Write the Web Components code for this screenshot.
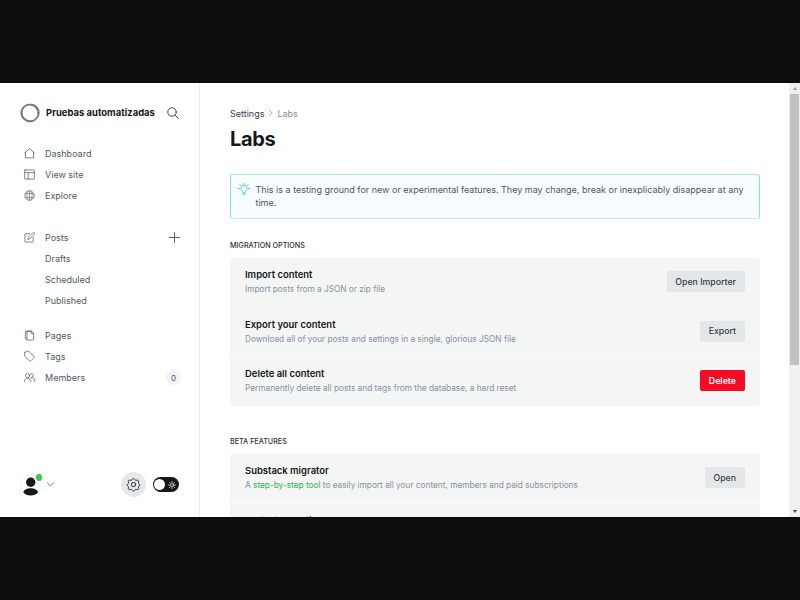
<!DOCTYPE html>
<html lang="es">
<head>
<meta charset="utf-8">
<title>Labs</title>
<style>
html,body{margin:0;height:100%;background:#0e0e0e}
body{display:flow-root;font-family:Inter,"Liberation Sans",sans-serif;font-size:9px;color:#15171a;overflow:hidden}
</style>
</head>
<body>
<ghost-app></ghost-app>
<script>
const define=(name,html)=>{
  const t=document.createElement('template');
  t.innerHTML=html;
  customElements.define(name,class extends HTMLElement{
    connectedCallback(){
      if(this.shadowRoot)return;
      this.attachShadow({mode:'open'}).append(t.content.cloneNode(true));
    }
  });
};

const icons={
  home:'<path d="M1.500 10.500 12 1.500l10.500 9M3.200 9.200v12.300h17.600V9.200"/>',
  layout:'<rect x="1.500" y="2" width="21" height="20" rx="1"/><path d="M2 8h20M9 8v14"/>',
  globe:'<circle cx="12" cy="12" r="10.500"/><path d="M2.500 8h19M2.500 16h19M12 2v20"/><path d="M9 2c-4 6-4 14 0 20M15 2c4 6 4 14 0 20"/>',
  edit:'<path d="M12.500 4H3.200A1.200 1.200 0 0 0 2 5.200V20.800A1.200 1.200 0 0 0 3.200 22H18.800A1.200 1.200 0 0 0 20 20.800V12M8.500 15.500l1-4.200L19 1.800a2 2 0 0 1 3.200 3.200L12.700 14.500z"/>',
  pages:'<path d="M6.500 4.500V22H19a2 2 0 0 0 2-2V6.500L17 3H8a1.500 1.500 0 0 0-1.500 1.500zM15.500 3v4.500H21M6.500 20H4.500A1.500 1.500 0 0 1 3 18.500V3.500A1.500 1.500 0 0 1 4.500 2h11"/>',
  tag:'<path d="M1.500 3.500v6.800a2 2 0 0 0 .6 1.400l9.900 9.900a2 2 0 0 0 2.800 0l7-7a2 2 0 0 0 0-2.800L12 2.100a2 2 0 0 0-1.400-.6H3.500a2 2 0 0 0-2 2z"/>',
  members:'<circle cx="7.800" cy="8" r="4.500"/><path d="M.8 21c0-10 14-10 14 0M14 4.200a4.300 4.300 0 1 1 1.800 8.100M16 12.500c4.500-.8 7.500 3 7.500 8"/>',
  search:'<circle cx="10" cy="10" r="8.500"/><path d="m16.200 16.200 6.800 6.800"/>',
  plus:'<path d="M12 1v22M1 12h22"/>',
  down:'<path d="m1 6 11 11L23 6"/>',
  right:'<path d="m6 2 11 10L6 22"/>',
  gear:'<circle cx="12" cy="12" r="4"/><path d="M9.700 2.300c.8-1.700 3.800-1.700 4.600 0l.5 1.100a2 2 0 0 0 2.400 1l1.200-.4c1.800-.6 3.700 1.300 3.100 3.100l-.4 1.200a2 2 0 0 0 1 2.400l.4.200c1.500.9 1.500 3.400-.2 4.200l-.4.200a2 2 0 0 0-.8 2.200l.4 1.200c.6 1.800-1.300 3.300-3.100 2.700l-1.200-.4a2 2 0 0 0-2.400 1l-.5.900c-.8 1.500-3.800 1.500-4.600 0l-.5-.9a2 2 0 0 0-2.400-1l-1.200.4c-1.800.6-3.700-.9-3.100-2.700l.4-1.200a2 2 0 0 0-.8-2.200l-.4-.2c-1.700-.8-1.700-3.300-.2-4.200l.4-.2a2 2 0 0 0 1-2.400l-.4-1.200C1.900 5.300 3.800 3.400 5.600 4l1.200.4a2 2 0 0 0 2.400-1z"/>',
  sun:'<circle cx="12" cy="12" r="4.500"/><path d="M12 1v3.500M12 19.500V23M1 12h3.500M19.500 12H23M4.200 4.200l2.500 2.500M17.300 17.300l2.500 2.500M4.200 19.800l2.500-2.500M17.300 6.700l2.500-2.500"/>',
  bulb:'<path d="M9.600 19v-2.500a6 6 0 1 1 4.800 0V19zM9.800 22.500h4.400M12 .5v2.800M.5 11h2.700M20.800 11h2.700M3.500 3.200l2.200 2.200M20.500 3.200l-2.200 2.200"/>'
};
customElements.define('ui-icon',class extends HTMLElement{
  connectedCallback(){
    if(this.shadowRoot)return;
    const s=this.getAttribute('size')||11,w=this.getAttribute('stroke')||1.6;
    this.attachShadow({mode:'open'}).innerHTML=`<style>:host{display:block;flex:none;width:${s}px;height:${s}px}svg{display:block;width:100%;height:100%;overflow:visible;fill:none;stroke:currentColor;stroke-width:${w};stroke-linejoin:round;stroke-linecap:round}</style><svg viewBox="0 0 24 24">${icons[this.getAttribute('name')]}</svg>`;
  }
});

define('nav-item',`<style>
:host{display:flex;align-items:center;height:21.150px;padding:0 19px 0 24px;color:#4d5a66}
.i{width:21px;flex:none}
.t{flex:1}
</style><span class="i"><slot name="icon"></slot></span><span class="t"><slot></slot></span><slot name="end"></slot>`);

define('count-badge',`<style>:host{display:grid;place-items:center;width:15px;height:15px;margin-right:-1px;border-radius:50%;background:#f1f3f4;color:#4d5a66;font-size:8px}</style><slot></slot>`);

define('brand-header',`<style>
:host{display:flex;align-items:center;height:20px;padding:0 20px;color:#15171a}
svg{width:20px;height:20px;flex:none;fill:none}
b{font-weight:700;font-size:9.46px;line-height:12px;flex:1;margin:0 0 1px 6px;white-space:nowrap}
ui-icon{color:#394047}
</style><svg viewBox="0 0 20 20"><circle cx="10" cy="10" r="8.500" stroke="#55585b" stroke-width="1.300"/><ellipse cx="10.600" cy="9.500" rx="8.700" ry="8.300" stroke="#777" stroke-width=".9"/><ellipse cx="9.500" cy="10.500" rx="8.800" ry="8.200" stroke="#8a8a8a" stroke-width=".7" transform="rotate(30 10 10)"/></svg><b><slot></slot></b><ui-icon name="search" size="12" stroke="1.900"></ui-icon>`);

define('user-menu',`<style>
:host{display:flex;align-items:center;height:25px;padding:0 20px 0 20px}
.av{position:relative;width:22px;height:22px}
.av svg{display:block;width:22px;height:22px}
.dot{position:absolute;left:15.500px;top:.500px;width:6.500px;height:6.500px;border-radius:50%;background:#30cf43}
.down{margin-left:5px;color:#626d79}
.gear{display:grid;place-items:center;width:25px;height:25px;border-radius:50%;background:#e6e9eb;margin-left:auto;color:#222629}
.sw{display:flex;align-items:center;justify-content:space-between;box-sizing:border-box;width:26.500px;height:14.500px;margin-left:7px;padding:1.500px 3px 1.500px 1.200px;border-radius:8px;background:#15171a;color:#fff}
.k{width:11.500px;height:11.500px;border-radius:50%;background:#fff}
</style>
<div class="av"><svg viewBox="0 0 22 22"><circle cx="11" cy="11" r="10.500" fill="#fff" stroke="#f0f1f2"/><circle cx="10.700" cy="8.300" r="4.700" fill="#15171a"/><path d="M3.300 18.200c1.500-5.200 13.300-5.200 14.800 0-3.300 4.300-11.500 4.300-14.800 0z" fill="#15171a"/></svg><span class="dot"></span></div>
<ui-icon class="down" name="down" size="7" stroke="3"></ui-icon>
<div class="gear"><ui-icon name="gear" size="13" stroke="1.800"></ui-icon></div>
<div class="sw"><span class="k"></span><ui-icon name="sun" size="8" stroke="2"></ui-icon></div>`);

define('side-bar',`<style>
:host{display:flex;flex-direction:column;box-sizing:border-box;width:200px;height:100%;flex:none;padding:20px 0;border-right:1px solid #ebeef0}
.g1{margin-top:20px}.g2{margin-top:20.500px}.g3{margin-top:13.500px}
user-menu{margin-top:auto}
.plus{color:#394047}
</style>
<brand-header>Pruebas automatizadas</brand-header>
<div class="g1">
<nav-item><ui-icon slot="icon" name="home"></ui-icon>Dashboard</nav-item>
<nav-item><ui-icon slot="icon" name="layout"></ui-icon>View site</nav-item>
<nav-item><ui-icon slot="icon" name="globe" stroke="1.300"></ui-icon>Explore</nav-item>
</div>
<div class="g2">
<nav-item><ui-icon slot="icon" name="edit"></ui-icon>Posts<ui-icon class="plus" slot="end" name="plus" size="11" stroke="1.800"></ui-icon></nav-item>
<nav-item>Drafts</nav-item>
<nav-item>Scheduled</nav-item>
<nav-item>Published</nav-item>
</div>
<div class="g3">
<nav-item><ui-icon slot="icon" name="pages"></ui-icon>Pages</nav-item>
<nav-item><ui-icon slot="icon" name="tag"></ui-icon>Tags</nav-item>
<nav-item><ui-icon slot="icon" name="members"></ui-icon>Members<count-badge slot="end">0</count-badge></nav-item>
</div>
<user-menu></user-menu>`);

define('info-box',`<style>
:host{display:flex;box-sizing:border-box;height:45px;padding:8px 8px;border:1px solid #8fdaf9;border-top-color:#a9e2fa;border-bottom-color:#bfe9fb;border-radius:2px;background:#f7fcff;color:#50565d;line-height:13.300px}
ui-icon{color:#45c3f7;margin:0 5.200px 0 -.700px}
</style><ui-icon name="bulb" size="12" stroke="1.800"></ui-icon><span><slot></slot></span>`);

define('action-button',`<style>
:host{display:grid;place-items:center;box-sizing:border-box;height:21px;padding:0 8.500px;border-radius:2px;background:#e3e7ea;color:#394047;font-size:8.750px;font-weight:500;white-space:nowrap}
:host([danger]){background:#f50b23;color:#fff;font-weight:600}
</style><slot></slot>`);

define('setting-row',`<style>
:host{display:flex;align-items:center;justify-content:space-between;box-sizing:border-box;height:49.300px;padding:0 15px;border-bottom:1px solid #fbfcfc}
:host([plain]){border-bottom-color:transparent}
h4{margin:0;font-size:9.460px;line-height:13px;font-weight:600;color:#15171a}
p{margin:2px 0 0;font-size:8.270px;line-height:12px;color:#8690a3}
</style><div><h4><slot name="title"></slot></h4><p><slot></slot></p></div><slot name="action"></slot>`);

define('setting-group',`<style>
:host{display:block}
h3{margin:0 0 6px;font-size:7.200px;line-height:13px;font-weight:500;color:#2b3036;text-transform:uppercase}
.box{background:#f4f6f6;border-radius:2px;overflow:hidden}
</style><h3><slot name="heading"></slot></h3><div class="box"><slot></slot></div>`);

define('scroll-bar',`<style>
:host{display:flex;flex-direction:column;align-items:center;box-sizing:border-box;width:11px;height:100%;padding:4px 0;background:#f0f0f0;flex:none}
.u,.d{width:0;height:0;flex:none;border:2.500px solid transparent}
.u{border-top:0;border-bottom:3px solid #999}
.d{border-bottom:0;border-top:3px solid #444;margin-top:auto}
.t{width:8.500px;height:271px;margin-top:4px;background:#c1c1c1}
</style><span class="u"></span><span class="t"></span><span class="d"></span>`);

define('labs-page',`<style>
:host{display:block;flex:1;box-sizing:border-box;padding:23px 29.500px 0 30px;height:100%;overflow:hidden}
nav{display:flex;align-items:center;height:14px;color:#394047}
nav ui-icon{margin:0 3.500px 0 3.500px;color:#9aa5b0}
nav .c{color:#8290a0}
h1{margin:6px 0 0;font-size:20px;line-height:26px;font-weight:700;letter-spacing:-.350px}
info-box{margin-top:22px}
.a{margin-top:19.800px}.b{margin-top:29px}
a{color:#30b24a}
</style>
<nav><span>Settings</span><ui-icon name="right" size="6" stroke="3.500"></ui-icon><span class="c">Labs</span></nav>
<h1>Labs</h1>
<info-box>This is a testing ground for new or experimental features. They may change, break or inexplicably disappear at any time.</info-box>
<setting-group class="a"><span slot="heading">Migration options</span>
<setting-row plain><span slot="title">Import content</span>Import posts from a JSON or zip file<action-button slot="action">Open Importer</action-button></setting-row>
<setting-row><span slot="title">Export your content</span>Download all of your posts and settings in a single, glorious JSON file<action-button slot="action">Export</action-button></setting-row>
<setting-row plain><span slot="title">Delete all content</span>Permanently delete all posts and tags from the database, a hard reset<action-button danger slot="action">Delete</action-button></setting-row>
</setting-group>
<setting-group class="b"><span slot="heading">Beta features</span>
<setting-row><span slot="title">Substack migrator</span>A <a>step-by-step tool</a> to easily import all your content, members and paid subscriptions<action-button slot="action">Open</action-button></setting-row>
<setting-row><span slot="title">Portal translation</span>&nbsp;</setting-row>
</setting-group>`);

define('ghost-app',`<style>
:host{display:flex;box-sizing:border-box;width:800px;height:434px;margin-top:83px;background:#fff;overflow:hidden}
</style><side-bar></side-bar><labs-page></labs-page><scroll-bar></scroll-bar>`);
</script>
</body>
</html>
